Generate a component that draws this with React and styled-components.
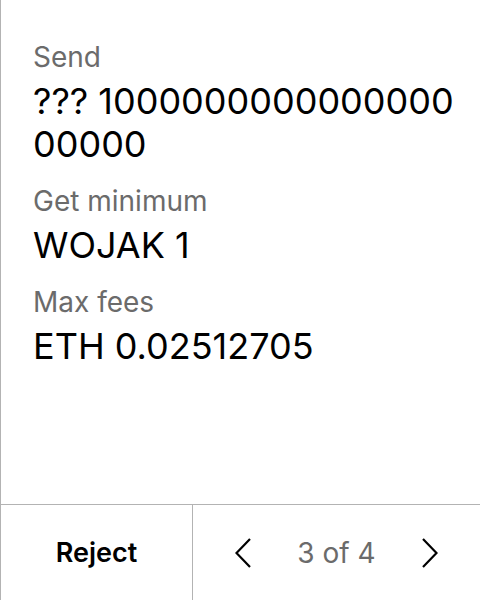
import React from "react";
import styled, { createGlobalStyle } from "styled-components";

const Global = createGlobalStyle`
  html, body { margin: 0; padding: 0; background: #fff; }
  body { font-family: Inter, "Noto Sans", sans-serif; }
  * { box-sizing: border-box; }
`;

const Screen = styled.div`
  width: 480px;
  height: 600px;
  display: flex;
  flex-direction: column;
  border-left: 1px solid #b3b3b3;
  background: #fff;
`;

const Body = styled.div`
  flex: 1;
  padding: 40px 20px 0 32px;
  display: flex;
  flex-direction: column;
  gap: 18px;
`;

const Field = styled.div`
  display: flex;
  flex-direction: column;
  gap: 6px;
`;

const Label = styled.div`
  font-size: 28px;
  line-height: 34px;
  color: #6b6b6b;
`;

const Value = styled.div`
  font-size: 36px;
  line-height: 43px;
  color: #000;
  word-break: break-all;
`;

const Footer = styled.div`
  height: 96px;
  border-top: 1px solid #b3b3b3;
  display: grid;
  grid-template-columns: 192px 1fr;
`;

const RejectButton = styled.button`
  border: none;
  border-right: 1px solid #b3b3b3;
  background: transparent;
  font-family: inherit;
  font-size: 27px;
  font-weight: 600;
  color: #000;
  padding: 0;
`;

const Pager = styled.div`
  display: flex;
  align-items: center;
  justify-content: space-between;
  padding: 0 42px 0 42px;
`;

const Arrow = styled.button`
  border: none;
  background: transparent;
  padding: 0;
  width: 16px;
  height: 30px;
  display: flex;
  align-items: center;
  justify-content: center;
`;

const Count = styled.span`
  font-size: 28px;
  color: #6b6b6b;
`;

const Chevron = ({ dir }) => (
  <svg width="16" height="30" viewBox="0 0 16 30" fill="none">
    <path
      d={dir === "left" ? "M15 1 L1.5 15 L15 29" : "M1 1 L14.5 15 L1 29"}
      stroke="#000"
      strokeWidth="2.2"
    />
  </svg>
);

export default function App() {
  return (
    <>
      <Global />
      <Screen>
        <Body>
          <Field>
            <Label>Send</Label>
            <Value>??? 100000000000000000000</Value>
          </Field>
          <Field>
            <Label>Get minimum</Label>
            <Value>WOJAK 1</Value>
          </Field>
          <Field>
            <Label>Max fees</Label>
            <Value>ETH 0.02512705</Value>
          </Field>
        </Body>
        <Footer>
          <RejectButton>Reject</RejectButton>
          <Pager>
            <Arrow><Chevron dir="left" /></Arrow>
            <Count>3 of 4</Count>
            <Arrow><Chevron dir="right" /></Arrow>
          </Pager>
        </Footer>
      </Screen>
    </>
  );
}
